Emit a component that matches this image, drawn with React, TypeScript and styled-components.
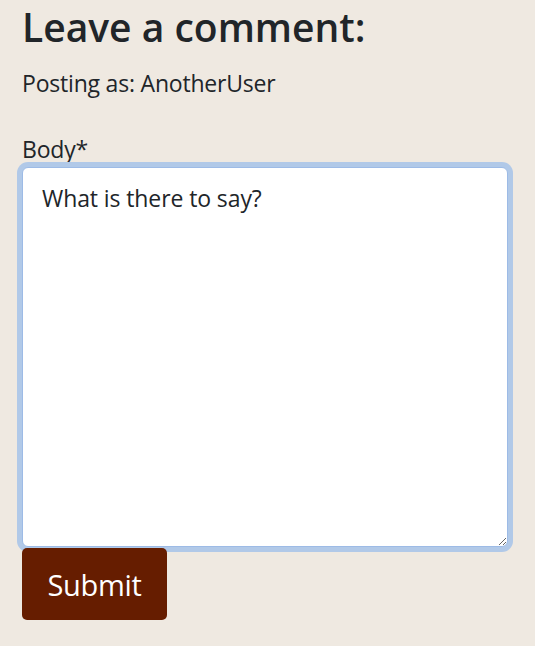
import React from 'react'
import styled, { createGlobalStyle } from 'styled-components'

const GlobalStyle = createGlobalStyle`
	html, body {
		margin: 0;
		padding: 0;
		background: #efe9e1;
	}

	body {
		font-family: 'Open Sans', 'Noto Sans', sans-serif;
		color: #212529;
	}
`

const App = () => {
	return (
		<>
			<GlobalStyle />
			<Page>
				<Heading>Leave a comment:</Heading>
				<PostingAs>Posting as: AnotherUser</PostingAs>
				<CommentForm onSubmit={(e) => e.preventDefault()}>
					<Label htmlFor='body'>Body*</Label>
					<BodyInput id='body' defaultValue='What is there to say?' />
					<SubmitButton type='submit'>Submit</SubmitButton>
				</CommentForm>
			</Page>
		</>
	)
}

const Page = styled.main`
	padding: 0 27px 0 22px;
`

const Heading = styled.h2`
	margin: 0;
	padding-top: 3px;
	font-size: 39px;
	font-weight: 600;
	line-height: 48px;
`

const PostingAs = styled.p`
	margin: 16px 0 0;
	font-size: 23px;
	line-height: 32px;
	letter-spacing: -0.2px;
`

const CommentForm = styled.form`
	display: flex;
	flex-direction: column;
	align-items: flex-start;
	margin-top: 34px;
`

const Label = styled.label`
	font-size: 23px;
	line-height: 32px;
	letter-spacing: -0.2px;
`

const BodyInput = styled.textarea`
	box-sizing: border-box;
	width: 486px;
	height: 380px;
	margin: 2px 0 0;
	padding: 14px 19px;
	font-family: inherit;
	font-size: 23px;
	line-height: 32px;
	letter-spacing: -0.1px;
	color: #212529;
	background: #fff;
	border: 1px solid #9dbbe6;
	border-radius: 6px;
	box-shadow: 0 0 0 5px #b1c9e8;
	outline: none;
	resize: vertical;
`

const SubmitButton = styled.button`
	position: relative;
	width: 145px;
	height: 72px;
	margin-top: 1px;
	padding: 0;
	font-family: inherit;
	font-size: 29px;
	letter-spacing: -0.3px;
	color: #fff;
	background: #661d00;
	border: none;
	border-radius: 5px;
	cursor: pointer;
`

export default App
